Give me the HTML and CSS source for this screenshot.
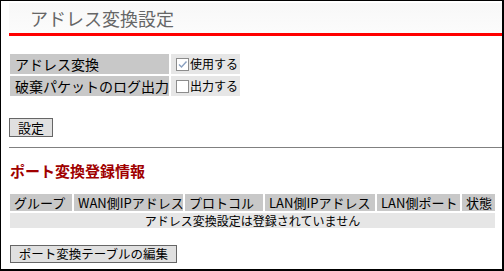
FILE: index.html
```html
<!DOCTYPE html>
<html lang="ja">
<head>
<meta charset="utf-8">
<link rel="stylesheet" href="styles.css">
</head>
<body>
<div class="page">
  <div class="header"><h1 class="title">アドレス変換設定</h1></div>

  <table class="settings">
    <tr>
      <th class="label">アドレス変換</th>
      <td class="value"><span class="box"><svg width="11" height="11" viewBox="0 0 11 11"><path d="M2 5.5 L4.5 8 L9.5 2.5" fill="none" stroke="#8aa0c0" stroke-width="1.4"/></svg></span>使用する</td>
    </tr>
    <tr>
      <th class="label">破棄パケットのログ出力</th>
      <td class="value"><span class="box"></span>出力する</td>
    </tr>
  </table>

  <button class="btn btn-set">設定</button>

  <div class="rule"></div>

  <h2 class="section">ポート変換登録情報</h2>

  <table class="ports">
    <tr class="head">
      <th class="c1">グループ</th>
      <th class="c2">WAN側IPアドレス</th>
      <th class="c3">プロトコル</th>
      <th class="c4">LAN側IPアドレス</th>
      <th class="c5">LAN側ポート</th>
      <th class="c6">状態</th>
    </tr>
    <tr class="empty">
      <td colspan="6">アドレス変換設定は登録されていません</td>
    </tr>
  </table>

  <button class="btn btn-edit">ポート変換テーブルの編集</button>
</div>
</body>
</html>
```

FILE: styles.css
```css
* { box-sizing: border-box; }
html, body { margin: 0; padding: 0; background: #fff; }
body {
  width: 504px;
  height: 271px;
  overflow: hidden;
  font-family: "Noto Sans CJK JP", "Noto Sans", sans-serif;
  color: #000;
}
.page {
  width: 504px;
  height: 271px;
  border-style: solid;
  border-color: #000;
  border-width: 1px 2px 2px 1px;
  padding: 2px 0 0 8px;
}
.header {
  height: 33px;
  background: linear-gradient(#f7f7f7, #fcfcfc);
  border-bottom: 3px solid #ff0000;
}
.title {
  margin: 0;
  padding-left: 21px;
  font-size: 18px;
  font-weight: normal;
  line-height: 30px;
  color: #666;
}
.settings {
  margin: 16px 0 0 -1px;
  border-collapse: separate;
  border-spacing: 2px;
}
.settings th, .settings td {
  height: 20px;
  padding: 0;
  white-space: nowrap;
}
.label {
  width: 159px;
  background: #c8c8c8;
  font-size: 14px;
  font-weight: normal;
  text-align: left;
  padding-left: 5px !important;
  line-height: 20px;
}
.value {
  width: 69px;
  background: #e6e6e6;
  font-size: 12px;
  line-height: 20px;
  padding-left: 5px !important;
}
.box {
  display: inline-block;
  width: 13px;
  height: 13px;
  border: 1px solid #8c8c8c;
  background: #fff;
  vertical-align: -2px;
  margin-right: 1px;
}
.box svg { display: block; }
.btn {
  display: block;
  font-family: "Noto Sans CJK JP", "Noto Sans", sans-serif;
  color: #000;
  background: #e0e0e0;
  border: 1px solid #666;
  border-radius: 0;
  padding: 0;
  margin: 0;
}
.btn-set {
  margin-top: 20px;
  margin-left: 0;
  width: 44px;
  height: 19px;
  font-size: 13px;
  line-height: 17px;
}
.rule {
  margin-top: 10px;
  height: 1px;
  border-top: 1px solid #808080;
}
.section {
  margin: 14px 0 0 1px;
  font-size: 15px;
  font-weight: bold;
  line-height: 18px;
  color: #a00000;
}
.ports {
  margin: 12px 0 0 -1px;
  border-collapse: separate;
  border-spacing: 2px;
  table-layout: fixed;
  width: 489px;
}
.ports th, .ports td {
  padding: 0;
  white-space: nowrap;
  overflow: hidden;
}
.head th {
  height: 17px;
  background: #c8c8c8;
  font-size: 13px;
  font-weight: normal;
  line-height: 17px;
  text-align: left;
  padding-left: 4px;
}
.c1 { width: 62px; }
.c2 { width: 109px; }
.c3 { width: 78px; }
.c4 { width: 110px; }
.c5 { width: 83px; }
.c6 { width: 33px; }
.empty td {
  height: 15px;
  background: #e6e6e6;
  font-size: 12px;
  line-height: 15px;
  text-align: center;
}
.btn-edit {
  margin-top: 15px;
  margin-left: 1px;
  width: 167px;
  height: 18px;
  font-size: 12.5px;
  line-height: 16px;
}
```
